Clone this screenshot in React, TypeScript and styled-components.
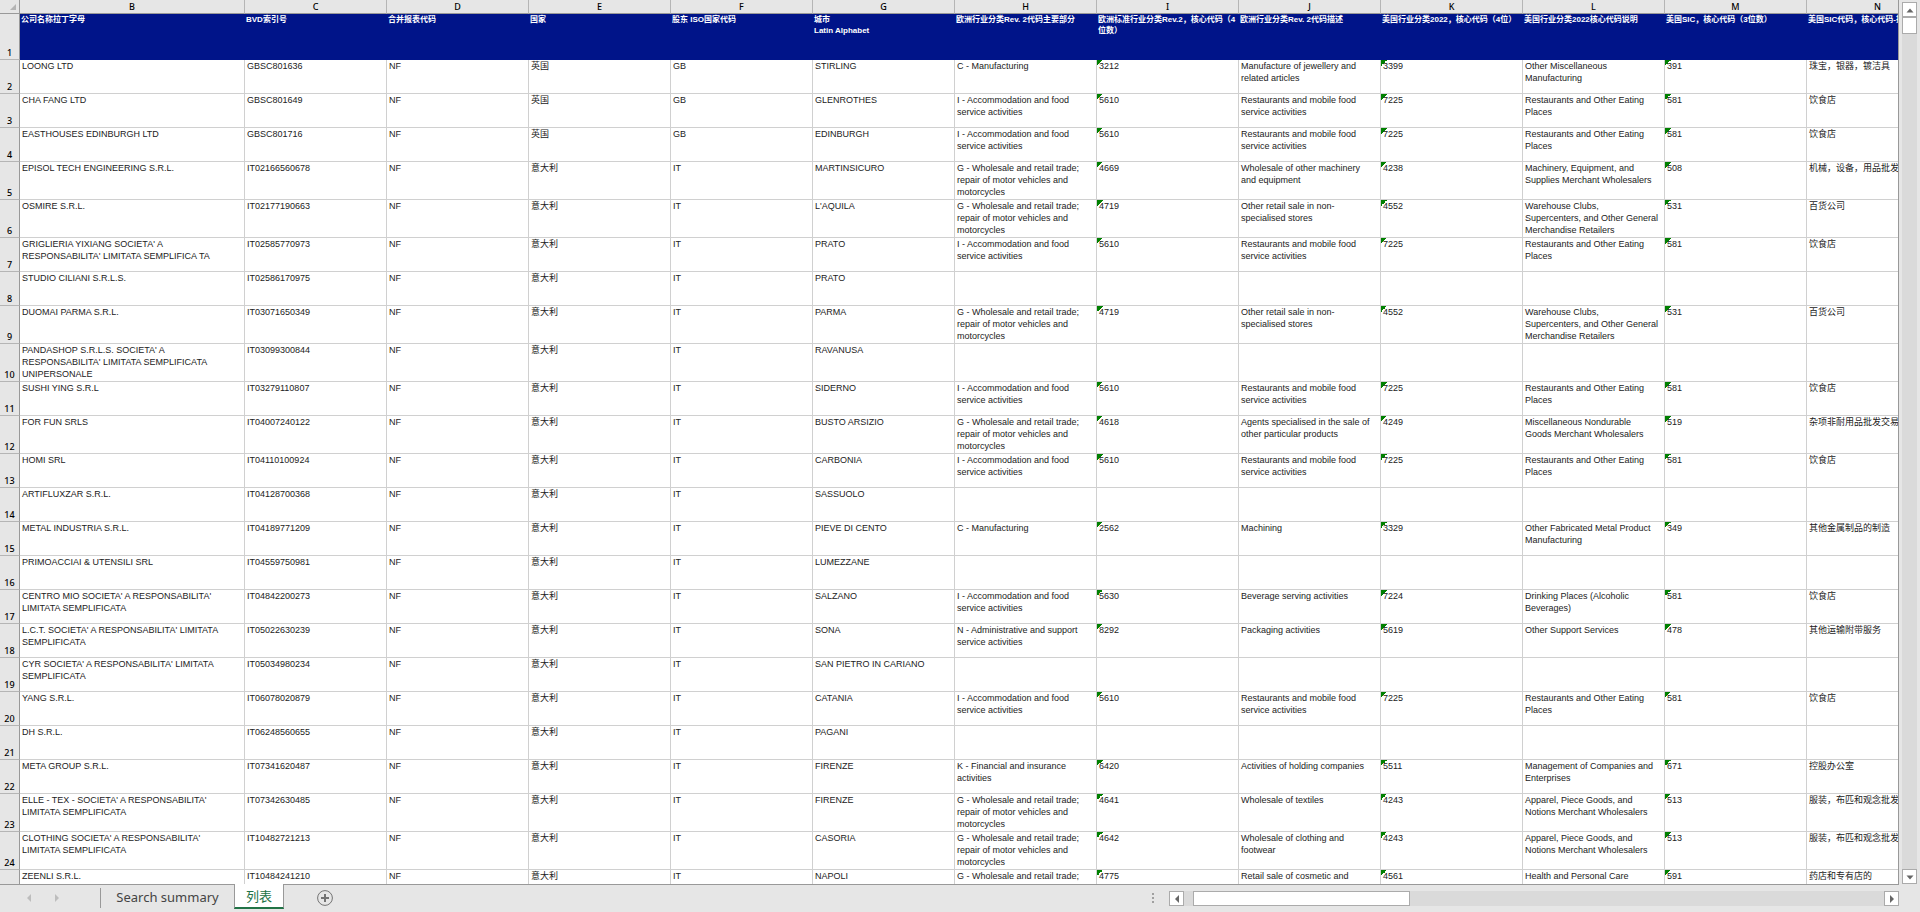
import React from "react";
import styled, { createGlobalStyle, css } from "styled-components";

const GlobalStyle = createGlobalStyle`
  * { box-sizing: border-box; }
  html, body, #root { height: 100%; }
  body {
    margin: 0;
    overflow: hidden;
    background: #e6e6e6;
    font-family: "Liberation Sans", "Noto Sans CJK SC", sans-serif;
  }
`;

const Workbook = styled.div`
  display: flex;
  flex-direction: column;
  height: 100vh;
  background: #e6e6e6;
`;

const SheetArea = styled.main`
  display: flex;
  flex: 1;
  min-height: 0;
`;

const SheetPane = styled.div`
  flex: 1;
  min-width: 0;
  overflow: hidden;
  border-right: 1px solid #999;
`;

const Grid = styled.table`
  table-layout: fixed;
  width: 1949px;
  border-collapse: separate;
  border-spacing: 0;
  background: #fff;
`;

const Col = styled.col<{ $width: number }>`
  width: ${(p) => p.$width}px;
`;

const headingFont = css`
  font-family: "Noto Sans", sans-serif;
  font-size: 9px;
  font-weight: 500;
  line-height: 10px;
  color: #000;
`;

const Corner = styled.td`
  height: 14px;
  padding: 0 3px 0 0;
  text-align: right;
  background: #e6e6e6;
  border-right: 1px solid #999;
  border-bottom: 1px solid #999;

  svg { display: block; margin-left: auto; }
`;

const ColumnLetter = styled.th`
  ${headingFont}
  height: 14px;
  padding: 1px 0 0;
  text-align: center;
  background: #e6e6e6;
  border-right: 1px solid #b5b5b5;
  border-bottom: 1px solid #999;
`;

const RowNumber = styled.th`
  ${headingFont}
  padding: 0 0 1px;
  text-align: center;
  vertical-align: bottom;
  background: #e6e6e6;
  border-right: 1px solid #999;
  border-bottom: 1px solid #b5b5b5;
`;

const Row = styled.tr<{ $height: number }>`
  height: ${(p) => p.$height}px;
`;

const TitleCell = styled.th`
  padding: 0 0 0 1px;
  overflow: hidden;
  background: #001489;
  color: #fff;
  font-size: 8px;
  font-weight: 700;
  line-height: 11px;
  text-align: left;
  vertical-align: top;
  white-space: pre;
`;

const Cell = styled.td<{ $flagged: boolean }>`
  padding: 0 0 0 2px;
  overflow: hidden;
  border-right: 1px solid #d0d0d0;
  border-bottom: 1px solid #d0d0d0;
  color: #222;
  font-size: 9px;
  line-height: 12px;
  text-align: left;
  vertical-align: top;
  white-space: pre;
  ${(p) =>
    p.$flagged &&
    css`
      background: linear-gradient(135deg, #008000 50%, transparent 50%) 0 0 / 6px 6px no-repeat;
    `}
`;

const VerticalBar = styled.div`
  display: flex;
  flex-direction: column;
  width: 15px;
  margin: 2px 3px 0;
  background: #dadada;
`;

const ArrowButton = styled.button`
  display: flex;
  align-items: center;
  justify-content: center;
  flex: none;
  width: 15px;
  height: 15px;
  padding: 0;
  background: #fff;
  border: 1px solid #ababab;
`;

const VerticalThumb = styled.div`
  height: 17px;
  background: #fff;
  border: 1px solid #ababab;
`;

const Spacer = styled.div`
  flex: 1;
`;

const BottomBar = styled.footer`
  display: flex;
  height: 28px;
  padding-right: 21px;
`;

const Tabs = styled.nav`
  display: flex;
  flex: 1;
  border-top: 1px solid #999;
`;

const TabArrows = styled.div`
  display: flex;
  gap: 20px;
  width: 101px;
  height: 20px;
  margin-top: 3px;
  padding-left: 25px;
  border-right: 1px solid #999;
`;

const PlainButton = styled.button`
  display: flex;
  align-items: center;
  justify-content: center;
  padding: 0;
  background: none;
  border: 0;
`;

const Tab = styled.button<{ $active?: boolean }>`
  width: 133px;
  height: 24px;
  padding: 0;
  border: 0;
  background: none;
  color: #444;
  font-family: "Noto Sans", "Noto Sans CJK SC", sans-serif;
  font-size: 13px;
  line-height: 22px;
  ${(p) =>
    p.$active &&
    css`
      width: 50px;
      height: 25px;
      margin-top: -1px;
      background: #fff;
      color: #217346;
      border: 1px solid #999;
      border-top: 0;
      border-bottom: 2px solid #217346;
    `}
`;

const AddButton = styled(PlainButton)`
  width: 16px;
  height: 16px;
  margin: 5px 0 0 33px;
`;

const ScrollSide = styled.div`
  display: flex;
  width: 747px;
  padding-top: 6px;
  border-top: 1px solid #999;
`;

const Grip = styled.svg`
  flex: none;
  margin-right: 15px;
`;

const HorizontalTrack = styled.div`
  display: flex;
  flex: 1;
  height: 15px;
  background: #dadada;
`;

const HorizontalThumb = styled.div`
  width: 217px;
  height: 15px;
  margin-left: 9px;
  background: #fff;
  border: 1px solid #ababab;
`;

type Direction = "up" | "down" | "left" | "right";

const ARROW_PATHS: Record<Direction, string> = {
  up: "M0.5 6.5 4 2.5 7.5 6.5z",
  down: "M0.5 2.5 4 6.5 7.5 2.5z",
  left: "M6 0 2 4 6 8z",
  right: "M2 0 6 4 2 8z",
};

const Arrow = ({ to, color = "#666" }: { to: Direction; color?: string }) => (
  <svg width="8" height="8" viewBox="0 0 8 8" aria-hidden="true">
    <path d={ARROW_PATHS[to]} fill={color} />
  </svg>
);

const COLUMNS = ["B", "C", "D", "E", "F", "G", "H", "I", "J", "K", "L", "M", "N"];

const TITLES = [
  "公司名称拉丁字母",
  "BVD索引号",
  "合并报表代码",
  "国家",
  "股东 ISO国家代码",
  "城市\nLatin Alphabet",
  "欧洲行业分类Rev. 2代码主要部分",
  "欧洲标准行业分类Rev.2，核心代码（4\n位数）",
  "欧洲行业分类Rev. 2代码描述",
  "美国行业分类2022，核心代码（4位）",
  "美国行业分类2022核心代码说明",
  "美国SIC，核心代码（3位数）",
  "美国SIC代码，核心代码-描述",
];

/* Columns whose numbers are stored as text carry a corner flag. */
const FLAGGED_COLUMNS = ["I", "K", "M"];

type Activity = [string, string, string, string, string, string, string];

const NONE: Activity = ["", "", "", "", "", "", ""];
const FOOD = "I - Accommodation and food\nservice activities";
const TRADE = "G - Wholesale and retail trade;\nrepair of motor vehicles and\nmotorcycles";
const RESTAURANT: Activity = [
  FOOD, "5610", "Restaurants and mobile food\nservice activities", "7225",
  "Restaurants and Other Eating\nPlaces", "581", "饮食店",
];
const DEPARTMENT_STORE: Activity = [
  TRADE, "4719", "Other retail sale in non-\nspecialised stores", "4552",
  "Warehouse Clubs,\nSupercenters, and Other General\nMerchandise Retailers", "531", "百货公司",
];
const APPAREL = "Apparel, Piece Goods, and\nNotions Merchant Wholesalers";

interface Company {
  name: string;
  id: string;
  country: "GB" | "IT";
  city: string;
  activity: Activity;
  tall?: boolean;
}

const company = (
  name: string, id: string, city: string, activity: Activity, tall = false,
): Company => ({ name, id, country: id.startsWith("GB") ? "GB" : "IT", city, activity, tall });

const COMPANIES: Company[] = [
  company("LOONG LTD", "GBSC801636", "STIRLING", [
    "C - Manufacturing", "3212", "Manufacture of jewellery and\nrelated articles", "3399",
    "Other Miscellaneous\nManufacturing", "391", "珠宝，银器，镀洁具",
  ]),
  company("CHA FANG LTD", "GBSC801649", "GLENROTHES", RESTAURANT),
  company("EASTHOUSES EDINBURGH LTD", "GBSC801716", "EDINBURGH", RESTAURANT),
  company("EPISOL TECH ENGINEERING S.R.L.", "IT02166560678", "MARTINSICURO", [
    TRADE, "4669", "Wholesale of other machinery\nand equipment", "4238",
    "Machinery, Equipment, and\nSupplies Merchant Wholesalers", "508", "机械，设备，用品批发",
  ], true),
  company("OSMIRE S.R.L.", "IT02177190663", "L'AQUILA", DEPARTMENT_STORE, true),
  company("GRIGLIERIA YIXIANG SOCIETA' A\nRESPONSABILITA' LIMITATA SEMPLIFICA TA", "IT02585770973", "PRATO", RESTAURANT),
  company("STUDIO CILIANI S.R.L.S.", "IT02586170975", "PRATO", NONE),
  company("DUOMAI PARMA S.R.L.", "IT03071650349", "PARMA", DEPARTMENT_STORE, true),
  company("PANDASHOP S.R.L.S. SOCIETA' A\nRESPONSABILITA' LIMITATA SEMPLIFICATA\nUNIPERSONALE", "IT03099300844", "RAVANUSA", NONE, true),
  company("SUSHI YING S.R.L", "IT03279110807", "SIDERNO", RESTAURANT),
  company("FOR FUN SRLS", "IT04007240122", "BUSTO ARSIZIO", [
    TRADE, "4618", "Agents specialised in the sale of\nother particular products", "4249",
    "Miscellaneous Nondurable\nGoods Merchant Wholesalers", "519", "杂项非耐用品批发交易",
  ], true),
  company("HOMI SRL", "IT04110100924", "CARBONIA", RESTAURANT),
  company("ARTIFLUXZAR S.R.L.", "IT04128700368", "SASSUOLO", NONE),
  company("METAL INDUSTRIA S.R.L.", "IT04189771209", "PIEVE DI CENTO", [
    "C - Manufacturing", "2562", "Machining", "3329",
    "Other Fabricated Metal Product\nManufacturing", "349", "其他金属制品的制造",
  ]),
  company("PRIMOACCIAI & UTENSILI SRL", "IT04559750981", "LUMEZZANE", NONE),
  company("CENTRO MIO SOCIETA' A RESPONSABILITA'\nLIMITATA SEMPLIFICATA", "IT04842200273", "SALZANO", [
    FOOD, "5630", "Beverage serving activities", "7224",
    "Drinking Places (Alcoholic\nBeverages)", "581", "饮食店",
  ]),
  company("L.C.T. SOCIETA' A RESPONSABILITA' LIMITATA\nSEMPLIFICATA", "IT05022630239", "SONA", [
    "N - Administrative and support\nservice activities", "8292", "Packaging activities", "5619",
    "Other Support Services", "478", "其他运输附带服务",
  ]),
  company("CYR SOCIETA' A RESPONSABILITA' LIMITATA\nSEMPLIFICATA", "IT05034980234", "SAN PIETRO IN CARIANO", NONE),
  company("YANG S.R.L.", "IT06078020879", "CATANIA", RESTAURANT),
  company("DH S.R.L.", "IT06248560655", "PAGANI", NONE),
  company("META GROUP S.R.L.", "IT07341620487", "FIRENZE", [
    "K - Financial and insurance\nactivities", "6420", "Activities of holding companies", "5511",
    "Management of Companies and\nEnterprises", "671", "控股办公室",
  ]),
  company("ELLE - TEX - SOCIETA' A RESPONSABILITA'\nLIMITATA SEMPLIFICATA", "IT07342630485", "FIRENZE", [
    TRADE, "4641", "Wholesale of textiles", "4243", APPAREL, "513", "服装，布匹和观念批发",
  ], true),
  company("CLOTHING SOCIETA' A RESPONSABILITA'\nLIMITATA SEMPLIFICATA", "IT10482721213", "CASORIA", [
    TRADE, "4642", "Wholesale of clothing and\nfootwear", "4243", APPAREL, "513", "服装，布匹和观念批发",
  ], true),
  company("ZEENLI S.R.L.", "IT10484241210", "NAPOLI", [
    "G - Wholesale and retail trade;", "4775", "Retail sale of cosmetic and", "4561",
    "Health and Personal Care", "591", "药店和专有店的",
  ], true),
];

const COUNTRY_NAMES = { GB: "英国", IT: "意大利" };

const cellsOf = (c: Company) => [
  c.name, c.id, "NF", COUNTRY_NAMES[c.country], c.country, c.city, ...c.activity,
];

export default function App() {
  return (
    <Workbook>
      <GlobalStyle />
      <SheetArea>
        <SheetPane>
          <Grid>
            <colgroup>
              <Col $width={20} />
              {COLUMNS.map((letter) => (
                <Col key={letter} $width={letter === "B" ? 225 : 142} />
              ))}
            </colgroup>
            <thead>
              <tr>
                <Corner>
                  <svg width="6" height="6" viewBox="0 0 6 6" aria-hidden="true">
                    <path d="M6 0v6H0z" fill="#b4b4b4" />
                  </svg>
                </Corner>
                {COLUMNS.map((letter) => (
                  <ColumnLetter key={letter} scope="col">{letter}</ColumnLetter>
                ))}
              </tr>
              <Row $height={46}>
                <RowNumber scope="row">1</RowNumber>
                {TITLES.map((title) => (
                  <TitleCell key={title} scope="col">{title}</TitleCell>
                ))}
              </Row>
            </thead>
            <tbody>
              {COMPANIES.map((c, index) => (
                <Row key={c.id} $height={c.tall ? 38 : 34}>
                  <RowNumber scope="row">{index + 2}</RowNumber>
                  {cellsOf(c).map((text, i) => (
                    <Cell
                      key={COLUMNS[i]}
                      $flagged={text !== "" && FLAGGED_COLUMNS.includes(COLUMNS[i])}
                    >
                      {text}
                    </Cell>
                  ))}
                </Row>
              ))}
            </tbody>
          </Grid>
        </SheetPane>
        <VerticalBar>
          <ArrowButton aria-label="Scroll up"><Arrow to="up" /></ArrowButton>
          <VerticalThumb />
          <Spacer />
          <ArrowButton aria-label="Scroll down"><Arrow to="down" /></ArrowButton>
        </VerticalBar>
      </SheetArea>
      <BottomBar>
        <Tabs>
          <TabArrows>
            <PlainButton aria-label="Previous sheet"><Arrow to="left" color="#bdbdbd" /></PlainButton>
            <PlainButton aria-label="Next sheet"><Arrow to="right" color="#bdbdbd" /></PlainButton>
          </TabArrows>
          <Tab>Search summary</Tab>
          <Tab $active>列表</Tab>
          <AddButton aria-label="New sheet">
            <svg width="16" height="16" viewBox="0 0 16 16" fill="none" stroke="#737373" aria-hidden="true">
              <circle cx="8" cy="8" r="7.4" />
              <path d="M8 4v8M4 8h8" strokeWidth="2" />
            </svg>
          </AddButton>
        </Tabs>
        <ScrollSide>
          <Grip width="2" height="15" viewBox="0 0 2 15" fill="#a0a0a0" aria-hidden="true">
            <path d="M0 2h2v2H0zM0 6h2v2H0zM0 10h2v2H0z" />
          </Grip>
          <HorizontalTrack>
            <ArrowButton aria-label="Scroll left"><Arrow to="left" /></ArrowButton>
            <HorizontalThumb />
            <Spacer />
            <ArrowButton aria-label="Scroll right"><Arrow to="right" /></ArrowButton>
          </HorizontalTrack>
        </ScrollSide>
      </BottomBar>
    </Workbook>
  );
}
